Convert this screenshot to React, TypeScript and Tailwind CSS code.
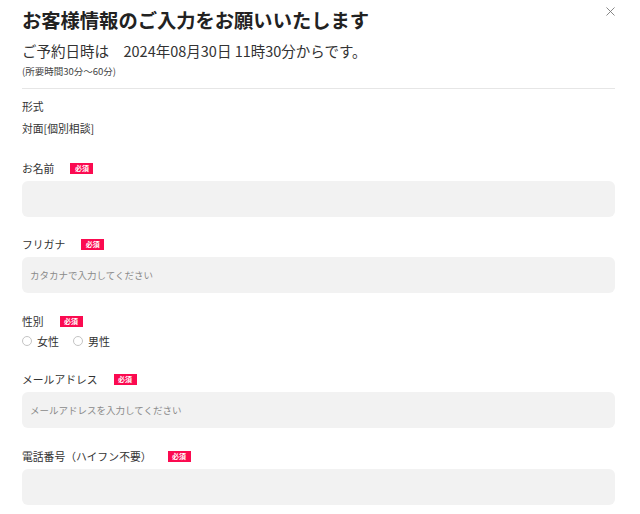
import { X } from "lucide-react";

const FONT = { fontFamily: '"Noto Sans CJK JP", "Noto Sans", sans-serif' };

function Badge() {
  return (
    <span className="ml-[16px] inline-flex h-[11px] w-[23px] items-center justify-center bg-[#fb0a50] text-[7px] font-bold leading-none text-white">
      必須
    </span>
  );
}

function FieldLabel({ text }: { text: string }) {
  return (
    <div className="flex h-4 items-center text-[10.8px] leading-4 text-[#333]">
      <span>{text}</span>
      <Badge />
    </div>
  );
}

function TextField({ label, placeholder, className }: { label: string; placeholder?: string; className?: string }) {
  return (
    <div className={className}>
      <FieldLabel text={label} />
      <input
        placeholder={placeholder}
        className="mt-[5px] block h-9 w-full rounded-md bg-[#f2f2f2] px-2 text-[9.5px] text-[#333] outline-none placeholder:text-[#8a8a8a]"
      />
    </div>
  );
}

function Radio({ label }: { label: string }) {
  return (
    <label className="flex items-center gap-[5px]">
      <span className="h-[10px] w-[10px] rounded-full border border-[#c4c4c4] bg-white" />
      <span>{label}</span>
    </label>
  );
}

export default function App() {
  return (
    <div className="relative h-[514px] w-[640px] overflow-hidden bg-white pl-[22px] pr-[25px] pt-[6px] text-[#333]" style={FONT}>
      <button className="absolute right-[22px] top-[4px] text-[#777]">
        <X size={15} strokeWidth={1.4} />
      </button>

      <h2 className="text-[19.3px] font-bold leading-7 text-[#222]">お客様情報のご入力をお願いいたします</h2>
      <p className="mt-[6px] text-[14.5px] leading-[22px] text-[#333]">ご予約日時は　2024年08月30日 11時30分からです。</p>
      <p className="mt-[2px] text-[9.5px] leading-[14px] text-[#444]">(所要時間30分〜60分)</p>

      <div className="mt-[10px] border-t border-[#e6e6e6]" />

      <div className="mt-[9px] text-[10.8px] leading-4">形式</div>
      <div className="mt-[6px] text-[10.8px] leading-4">対面[個別相談]</div>

      <TextField label="お名前" className="mt-6" />
      <TextField label="フリガナ" placeholder="カタカナで入力してください" className="mt-[19px]" />

      <div className="mt-5">
        <FieldLabel text="性別" />
        <div className="mt-1 flex h-4 items-center gap-[14px] text-[11px] leading-4">
          <Radio label="女性" />
          <Radio label="男性" />
        </div>
      </div>

      <TextField label="メールアドレス" placeholder="メールアドレスを入力してください" className="mt-[22px]" />
      <TextField label="電話番号（ハイフン不要）" className="mt-5" />
    </div>
  );
}
